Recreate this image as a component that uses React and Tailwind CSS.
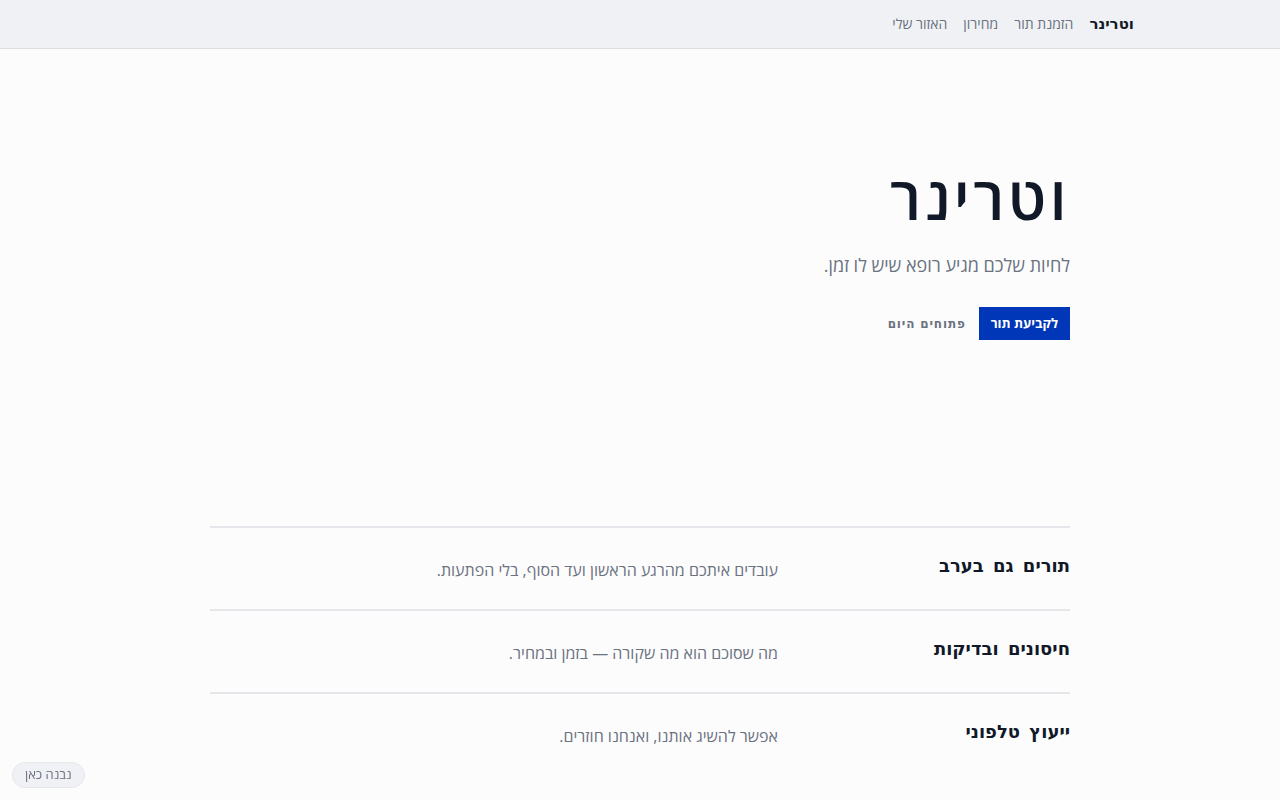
import React from "react";

const features = [
  { title: "תורים גם בערב", text: "עובדים איתכם מהרגע הראשון ועד הסוף, בלי הפתעות." },
  { title: "חיסונים ובדיקות", text: "מה שסוכם הוא מה שקורה — בזמן ובמחיר." },
  { title: "ייעוץ טלפוני", text: "אפשר להשיג אותנו, ואנחנו חוזרים." },
];

export default function App() {
  return (
    <div dir="rtl" className="min-h-screen w-full bg-[#fcfcfd] text-[#111827] font-['Open_Sans','Noto_Sans',sans-serif]">
      {/* Top nav */}
      <header className="h-[49px] bg-[#f0f1f5] border-b border-[#dcdde1]">
        <nav className="max-w-[1024px] mx-auto px-[18px] h-full flex items-center gap-4">
          <span className="text-[15px] font-bold font-['DejaVu_Sans',sans-serif] text-[#111827]">וטרינר</span>
          <a className="text-sm text-[#6b7280]">הזמנת תור</a>
          <a className="text-sm text-[#6b7280]">מחירון</a>
          <a className="text-sm text-[#6b7280]">האזור שלי</a>
        </nav>
      </header>

      <main className="max-w-[860px] mx-auto">
        {/* Hero */}
        <section className="pt-[108px] pb-[186px]">
          <h1 className="text-[60px] leading-[80px] font-semibold tracking-[0.06em] text-[#111827]">וטרינר</h1>
          <p className="mt-[14px] text-lg text-[#6b7280]">לחיות שלכם מגיע רופא שיש לו זמן.</p>
          <div className="mt-[28px] flex items-center gap-[13px]">
            <button className="h-[33px] px-[12px] bg-[#0036b8] text-white text-[13px] font-bold">לקביעת תור</button>
            <button className="text-xs font-bold tracking-[0.07em] text-[#6b7280] font-['DejaVu_Sans',sans-serif]">פתוחים היום</button>
          </div>
        </section>

        {/* Features */}
        <section>
          {features.map((f) => (
            <div key={f.title} className="grid grid-cols-[1fr_2fr] gap-2 items-center h-[83px] border-t-2 border-[#e5e7eb]">
              <h3 className="text-lg font-bold font-['DejaVu_Sans',sans-serif] [word-spacing:3px] text-[#111827] pb-[6px]">{f.title}</h3>
              <p className="text-base text-[#6b7280] pt-[2px]">{f.text}</p>
            </div>
          ))}
        </section>
      </main>

      <div className="fixed bottom-3 left-3 px-3 h-[26px] flex items-center rounded-full bg-[#f0f1f5] border border-[#e5e7eb] text-[13px] text-[#6b7280]">
        נבנה כאן
      </div>
    </div>
  );
}
